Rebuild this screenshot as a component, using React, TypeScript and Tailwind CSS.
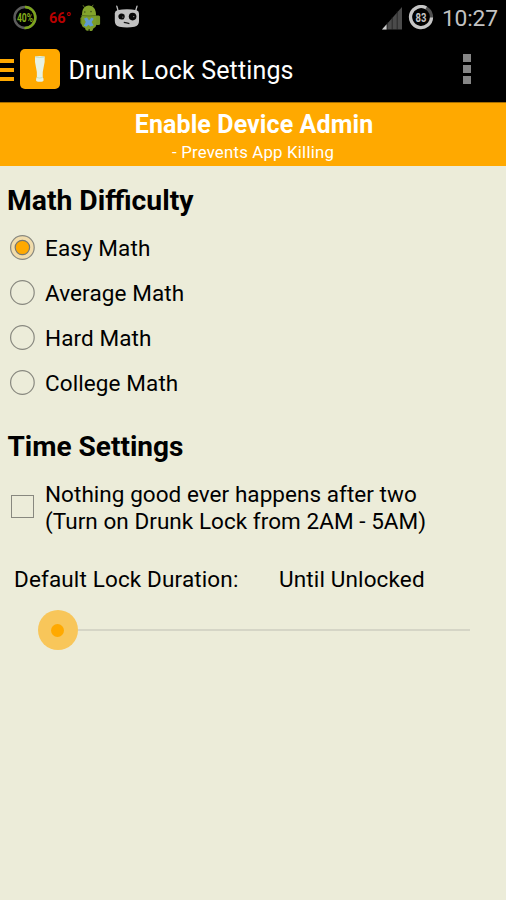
import React from "react";

function BatteryCircle() {
  return (
    <svg width="26" height="26" viewBox="0 0 26 26" className="shrink-0">
      <circle cx="13" cy="12.500" r="10.500" fill="none" stroke="#5c5c5c" strokeWidth="2.400" />
      <path d="M13 2a10.500 10.500 0 1 1-.5 21" fill="none" stroke="#7da51c" strokeWidth="2.400" />
      <g transform="translate(13 17) scale(.68 1)">
        <text textAnchor="middle" fontFamily="Roboto, sans-serif" fontSize="12.500" fontWeight="700" fill="#84ad1c">40%</text>
      </g>
    </svg>
  );
}

function AndroidBot() {
  return (
    <svg width="22" height="28" viewBox="0 0 22 28" className="shrink-0">
      <path d="M4.500 3.500 3 1.200M11.500 3l1.800-2.200" stroke="#5f7426" strokeWidth="1" />
      <path d="M2 11C2 5 4.500 1.500 8.800 1.500S16 5 16 11z" fill="#84a42c" />
      <rect x="15.500" y="11.500" width="4.600" height="9.500" rx="1.500" fill="#769728" />
      <rect x="0.400" y="13" width="3" height="7" rx="1.500" fill="#65831f" />
      <path d="M1.500 11h14.800V21q-.5 3-3 3.500l-.8 2q-2 1-3 0V25H8.700v1.500q-1.800.8-3-.5L5 24q-3-.8-3.500-3.500z" fill="#7b9d29" />
      <path d="M2 11.500q7 1 14 0" stroke="#536d1d" strokeWidth=".8" fill="none" />
      <path d="m4 14.500 3-1 2 3 2.500-3 2.300 1.300-2.200 3.300 2 3.500-3.300.9-1.700-1.800-2.400 2-2.500-1 2.100-3.700z" fill="#5f9bd3" />
      <circle cx="4.800" cy="8" r=".8" fill="#3e501c" /><circle cx="11" cy="7.600" r=".8" fill="#3e501c" />
    </svg>
  );
}

function CidFace() {
  return (
    <svg width="26" height="24" viewBox="0 0 26 24" className="shrink-0">
      <path d="M4.200 6 2.800 1.200M21.600 6 23 1.200" stroke="#bdbdbd" strokeWidth="1.300" strokeLinecap="round" />
      <path d="M.8 8.500Q.8 6 3.200 5.300q9.800-2 19.500 0Q25 6 25 8.500V16q0 4.500-4.500 5.700-7.500 1.600-15.200 0Q.8 20.500.8 16z" fill="#c1c1c1" />
      <path d="M4.300 12q-.2-2.500 1.800-3.300 2.500-.6 4.400 1 1 2.800-.8 4.500Q5 15.500 4.300 12z" fill="#080808" />
      <circle cx="18.600" cy="11.600" r="3.800" fill="#080808" />
      <circle cx="8.800" cy="12" r=".6" fill="#aaa" /><circle cx="19.800" cy="11.600" r=".6" fill="#aaa" />
      <path d="M9.800 17.400q3 .6 5.600 1.200" stroke="#151515" strokeWidth="1.300" fill="none" />
    </svg>
  );
}

function Signal() {
  return (
    <svg width="21" height="23" viewBox="0 0 21 23" className="shrink-0">
      <path d="M0 22.500 20 0v22.500z" fill="#4b4b4b" />
      <path d="M0 22.500 4.700 17.200v5.300z" fill="#d0d0d0" />
      <path d="M5.200 15v8M10.200 10v13M15.200 4v19" stroke="#1c1c1c" strokeWidth=".7" />
    </svg>
  );
}

function BatteryRing() {
  return (
    <svg width="26" height="26" viewBox="0 0 26 26" className="shrink-0">
      <circle cx="13" cy="12" r="10.500" fill="none" stroke="#505050" strokeWidth="3.200" />
      <path d="M23.500 12.500A10.500 10.500 0 1 1 18.200 2.900" fill="none" stroke="#c6c6c6" strokeWidth="3.200" />
      <g transform="translate(13 16.500) scale(.76 1)">
        <text textAnchor="middle" fontFamily="Roboto, sans-serif" fontSize="12.500" fontWeight="700" fill="#c6c6c6">83</text>
      </g>
    </svg>
  );
}

function BeerGlass() {
  return (
    <svg width="40" height="40" viewBox="0 0 40 40">
      <path d="M15 7.500q4.800-1 9.700 0 .5 6-1.200 11.500-1.200 4.500-.8 8.500.2 1.300.8 2.300v1.700q0 1.300-3.700 1.300t-3.700-1.300v-1.700q.6-1 .8-2.300.4-4-.8-8.500Q14.500 13 15 7.500z" fill="#e6f2e4" />
      <path d="M15.200 8q4.600 1 9.300 0M16.800 28.500q3 1.200 6 0" stroke="#c2dfc9" strokeWidth="1" fill="none" />
    </svg>
  );
}

const levels = ["Easy Math", "Average Math", "Hard Math", "College Math"];

function Radio({ label, checked }: { label: string; checked: boolean }) {
  return (
    <label className="flex h-[45px] items-center">
      <svg width="26" height="26" viewBox="0 0 26 26" className="mr-[10px] shrink-0">
        <circle cx="13.400" cy="12.500" r="11.800" fill={checked ? "#f1dcab" : "none"} stroke="#88887f" strokeWidth="1.200" />
        {checked && <circle cx="13.400" cy="12.500" r="7.200" fill="#ffa900" stroke="#77776f" strokeWidth="1.200" />}
      </svg>
      <span className="pt-[2px] tracking-[0.1px] whitespace-nowrap">{label}</span>
    </label>
  );
}

export default function App() {
  return (
    <div className="flex h-[900px] w-[506px] flex-col overflow-hidden bg-[#ececd9] font-['Roboto',sans-serif] text-[22.5px] leading-[27px] text-black">
      <div className="flex h-[36px] shrink-0 items-center bg-black pl-3 text-[#c2c2c2]">
        <BatteryCircle />
        <span className="ml-[11px] w-[30.5px] text-[14.5px] font-bold text-[#b80000]">66°</span>
        <AndroidBot />
        <span className="mb-[2px] ml-[12px] flex"><CidFace /></span>
        <span className="ml-auto flex"><Signal /></span>
        <span className="ml-[5px] flex"><BatteryRing /></span>
        <span className="ml-2 w-[64px] text-[22.800px] tracking-[-0.2px]">10:27</span>
      </div>
      <header className="flex h-[66px] shrink-0 items-center bg-black text-white">
        <div className="flex w-[14px] flex-col gap-[5px] pt-[2px]">
          <i className="h-[4px] bg-[#ffa900]" /><i className="h-[4px] bg-[#ffa900]" /><i className="h-[4px] bg-[#ffa900]" />
        </div>
        <div className="ml-[6px] h-10 w-10 rounded-[5px] bg-[#ffa900]"><BeerGlass /></div>
        <h1 className="ml-[8.5px] pt-[2px] text-[25px] tracking-[0.15px]">Drunk Lock Settings</h1>
        <div className="mr-[35px] ml-auto flex flex-col gap-[3px]">
          <i className="h-2 w-2 bg-[#868686]" /><i className="h-2 w-2 bg-[#868686]" /><i className="h-2 w-2 bg-[#868686]" />
        </div>
      </header>
      <section className="flex h-16 shrink-0 flex-col items-center border-t border-[#a66e00] bg-[#ffa900] pt-2 text-white">
        <h2 className="pl-[2px] text-[25px] font-bold tracking-[0.1px]">Enable Device Admin</h2>
        <p className="text-[16.800px] leading-[28px] tracking-[0.2px]">- Prevents App Killing</p>
      </section>
      <main className="flex flex-col">
        <h2 className="mt-[18px] ml-[7px] text-[28.3px] leading-[33px] font-bold">Math Difficulty</h2>
        <div className="mt-[8px] ml-[9px] flex flex-col">
          {levels.map((l, i) => <Radio key={l} label={l} checked={i === 0} />)}
        </div>
        <h2 className="mt-[25px] ml-[7.5px] text-[28px] leading-[33px] font-bold">Time Settings</h2>
        <label className="mt-[18px] ml-[11px] flex items-center">
          <i className="mr-[11px] mb-[4px] h-[23px] w-[23px] border border-[#88887f]" />
          <span className="flex flex-col tracking-[0.05px] whitespace-nowrap"><span>Nothing good ever happens after two</span><span>(Turn on Drunk Lock from 2AM - 5AM)</span></span>
        </label>
        <div className="mt-[31px] ml-[14px] flex tracking-[0.14px] whitespace-nowrap">
          <span className="w-[265px]">Default Lock Duration:</span><span>Until Unlocked</span>
        </div>
        <div className="mt-[17px] ml-[37.5px] flex h-[40px] w-[432px] items-center">
          <span className="flex h-[40px] w-[40px] items-center justify-center rounded-full bg-[#f8c65a]"><i className="h-[13px] w-[13px] rounded-full bg-[#ffa900]" /></span>
          <i className="h-[2px] flex-1 bg-[#d5d5c6]" />
        </div>
      </main>
    </div>
  );
}
